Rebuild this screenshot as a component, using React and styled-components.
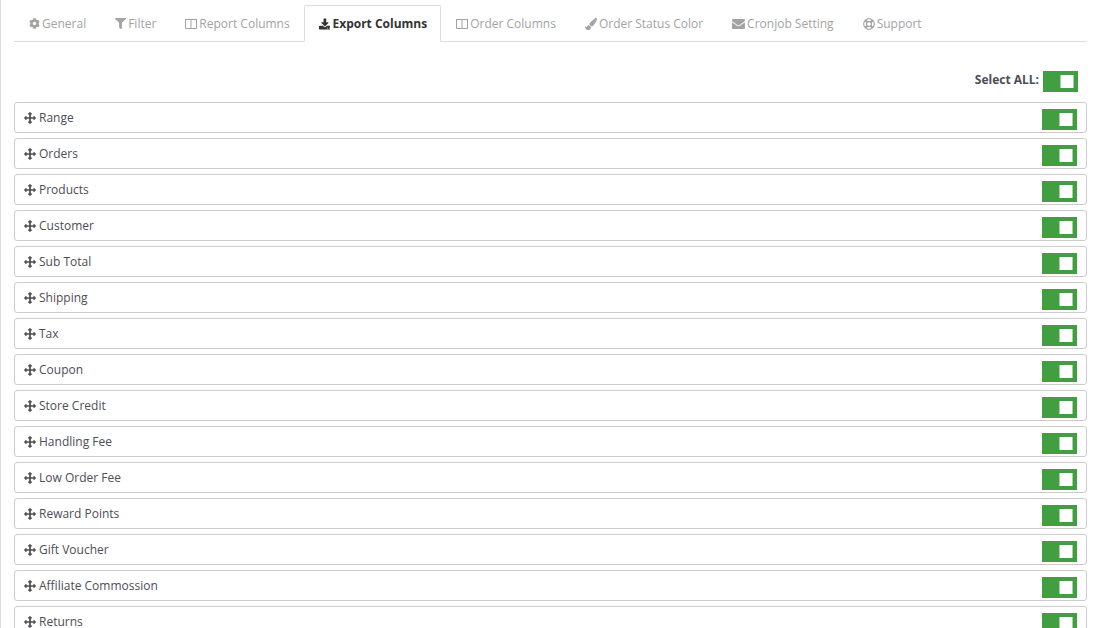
import React, { useState } from 'react';
import styled, { createGlobalStyle, css } from 'styled-components';
import { FaCog, FaFilter, FaPaintBrush, FaRegLifeRing } from 'react-icons/fa';

const GlobalStyle = createGlobalStyle`
  *,
  *::before {
    box-sizing: border-box;
  }

  body {
    margin: 0;
    background: #fff;
    color: #4d4d55;
    font-family: 'Open Sans', sans-serif;
    font-size: 12px;
    line-height: 18px;
  }
`;

const Page = styled.main`
  min-height: 100vh;
  padding: 5px 9px 0 13px;
  border-left: 1px solid #dcdcdc;
`;

const Tabs = styled.nav`
  display: flex;
  border-bottom: 1px solid #ddd;
`;

const Tab = styled.a`
  display: flex;
  align-items: center;
  gap: 2px;
  height: 37px;
  margin-bottom: -1px;
  padding: 0 13px 0 14px;
  border: 1px solid transparent;
  color: #a3a3a3;
  text-decoration: none;
  white-space: nowrap;

  ${({ $active }) =>
    $active &&
    css`
      border-color: #ddd #ddd #fff;
      border-radius: 2px 2px 0 0;
      background: #fff;
      color: #333;
      font-weight: 700;
    `}
`;

const TabIcon = styled.span`
  display: flex;

  svg {
    width: auto;
    height: ${({ $small }) => ($small ? '11px' : '12px')};
  }
`;

const SelectAll = styled.label`
  display: flex;
  justify-content: flex-end;
  align-items: flex-start;
  gap: 4px;
  height: 21px;
  margin: 29px 9px 10px 0;
  font-weight: 700;
`;

const Switch = styled.input.attrs({ type: 'checkbox' })`
  appearance: none;
  display: flex;
  align-items: center;
  justify-content: flex-start;
  width: 35px;
  height: 21px;
  margin: 0;
  padding: 0 4px;
  background: #999;
  cursor: pointer;

  &::before {
    content: '';
    width: 14px;
    height: 13px;
    border: solid #a5d2a5;
    border-width: 0 1px;
    background: #fff;
  }

  &:checked {
    justify-content: flex-end;
    background: #419f41;
  }
`;

const RowSwitch = styled(Switch)`
  margin-top: 4px;
`;

const ColumnList = styled.ul`
  display: flex;
  flex-direction: column;
  gap: 5px;
  margin: 0;
  padding: 0;
  list-style: none;
`;

const ColumnRow = styled.li`
  display: flex;
  align-items: center;
  height: 31px;
  padding: 0 9px;
  border: 1px solid #ccc;
  border-radius: 3px;
`;

const RowLabel = styled.label`
  display: flex;
  flex: 1;
  align-items: center;
  justify-content: space-between;
`;

const RowName = styled.span`
  display: flex;
  align-items: center;
  gap: 3px;
`;

const ColumnsIcon = () => (
  <svg viewBox="0 0 12 12" fill="none" stroke="currentColor">
    <path d="M.5 1.5h11v9H.5zM6 1v10M0 1.5h12" />
  </svg>
);

const DownloadIcon = () => (
  <svg viewBox="0 -80 1664 1696" fill="currentColor">
    <path d="M1280 1344q0-26-19-45t-45-19-45 19-19 45 19 45 45 19 45-19 19-45zm256 0q0-26-19-45t-45-19-45 19-19 45 19 45 45 19 45-19 19-45zm128-224v320q0 40-28 68t-68 28H96q-40 0-68-28t-28-68v-320q0-40 28-68t68-28h465l135 136q58 56 136 56t136-56l136-136h464q40 0 68 28t28 68zm-325-569q17 41-14 70l-448 448q-18 19-45 19t-45-19L339 621q-31-29-14-70 17-39 59-39h256V64q0-26 19-45t45-19h256q26 0 45 19t19 45v448h256q42 0 59 39z" />
  </svg>
);

const EnvelopeIcon = () => (
  <svg viewBox="0 128 1792 1664" fill="currentColor">
    <path d="M1792 710v794q0 66-47 113t-113 47H160q-66 0-113-47T0 1504V710q44 49 101 87 362 246 497 345 57 42 92.500 65.500t94.500 48 110 24.500h2q51 0 110-24.500t94.500-48 92.500-65.500q170-123 498-345 57-39 100-87zm0-294q0 79-49 151t-122 123q-376 261-468 325-10 7-42.500 31t-54 38.500-52 32.500-57.500 27-50 9h-2q-23 0-50-9t-57.500-27-52-32.500-54-38.500-42.500-31q-91-64-262-182.500t-205-142.500q-62-42-117-115.500t-55-136.500q0-78 41.500-130t118.500-52h1472q65 0 112.500 47t47.500 113z" />
  </svg>
);

const MoveIcon = () => (
  <svg width="12" height="12" viewBox="0 0 1792 1792" fill="currentColor">
    <path d="M1792 896q0 26-19 45l-256 256q-19 19-45 19t-45-19-19-45v-128h-384v384h128q26 0 45 19t19 45-19 45l-256 256q-19 19-45 19t-45-19l-256-256q-19-19-19-45t19-45 45-19h128v-384H384v128q0 26-19 45t-45 19-45-19L19 941Q0 922 0 896t19-45l256-256q19-19 45-19t45 19 19 45v128h384V384H640q-26 0-45-19t-19-45 19-45L851 19q19-19 45-19t45 19l256 256q19 19 19 45t-19 45-45 19h-128v384h384V640q0-26 19-45t45-19 45 19l256 256q19 19 19 45z" />
  </svg>
);

const tabs = [
  { name: 'General', icon: FaCog, small: true },
  { name: 'Filter', icon: FaFilter, small: true },
  { name: 'Report Columns', icon: ColumnsIcon },
  { name: 'Export Columns', icon: DownloadIcon },
  { name: 'Order Columns', icon: ColumnsIcon },
  { name: 'Order Status Color', icon: FaPaintBrush },
  { name: 'Cronjob Setting', icon: EnvelopeIcon },
  { name: 'Support', icon: FaRegLifeRing },
];

const columns = [
  'Range',
  'Orders',
  'Products',
  'Customer',
  'Sub Total',
  'Shipping',
  'Tax',
  'Coupon',
  'Store Credit',
  'Handling Fee',
  'Low Order Fee',
  'Reward Points',
  'Gift Voucher',
  'Affiliate Commossion',
  'Returns',
];

const App = () => {
  const [activeTab, setActiveTab] = useState('Export Columns');
  const [selected, setSelected] = useState(columns);

  const toggleColumn = (name) => {
    setSelected((prev) =>
      prev.includes(name) ? prev.filter((c) => c !== name) : [...prev, name]
    );
  };

  const handleTab = (e, name) => {
    e.preventDefault();
    setActiveTab(name);
  };

  return (
    <>
      <GlobalStyle />
      <Page>
        <Tabs>
          {tabs.map(({ name, icon: Icon, small }) => (
            <Tab
              key={name}
              href="#"
              $active={name === activeTab}
              onClick={(e) => handleTab(e, name)}
            >
              <TabIcon $small={small}>
                <Icon />
              </TabIcon>
              {name}
            </Tab>
          ))}
        </Tabs>

        <SelectAll htmlFor="select-all">
          Select ALL:
          <Switch
            id="select-all"
            checked={selected.length === columns.length}
            onChange={(e) => setSelected(e.target.checked ? columns : [])}
          />
        </SelectAll>

        <ColumnList>
          {columns.map((name) => (
            <ColumnRow key={name}>
              <RowLabel>
                <RowName>
                  <MoveIcon />
                  {name}
                </RowName>
                <RowSwitch
                  checked={selected.includes(name)}
                  onChange={() => toggleColumn(name)}
                />
              </RowLabel>
            </ColumnRow>
          ))}
        </ColumnList>
      </Page>
    </>
  );
};

export default App;
